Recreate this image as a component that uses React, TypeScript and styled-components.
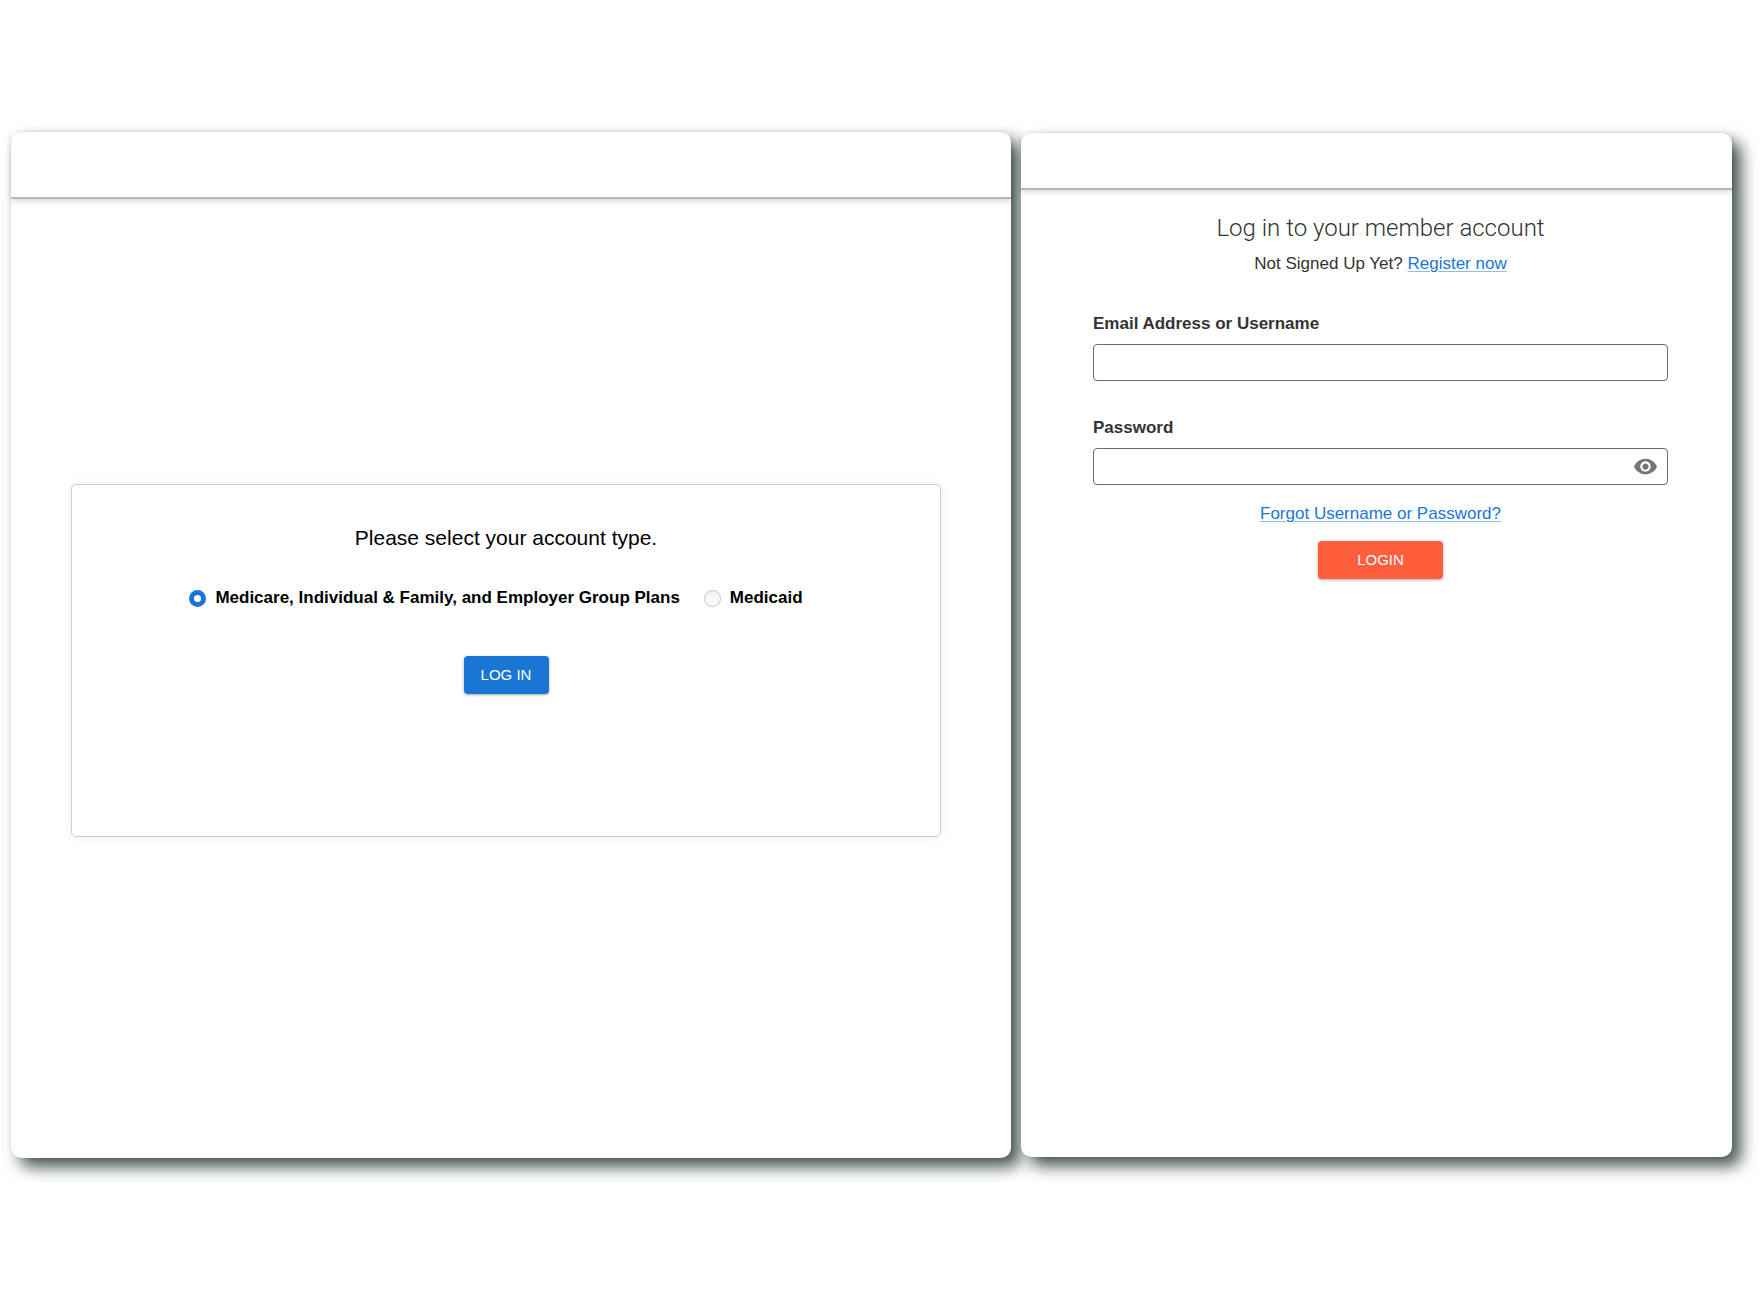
import React, { useState } from 'react';
import styled, { createGlobalStyle } from 'styled-components';

const GlobalStyle = createGlobalStyle`
  *, *::before, *::after { box-sizing: border-box; }
  body {
    margin: 0;
    background: #fff;
    font-family: "Liberation Sans", Arial, Helvetica, sans-serif;
  }
`;

const Page = styled.main`
  display: grid;
  grid-template-columns: 1000fr 711fr;
  gap: 10px;
  min-height: 100vh;
  padding: 132px 30px 132px 11px;
`;

const Panel = styled.section<{ $inset?: boolean }>`
  display: flex;
  flex-direction: column;
  margin: ${(p) => (p.$inset ? '1px 0' : '0')};
  border-radius: 10px;
  background: #fff;
  box-shadow: 0 0 1px rgba(0, 0, 0, 0.25), 9px 9px 16px #45554f;
`;

const TopBar = styled.header<{ $height: number }>`
  height: ${(p) => p.$height}px;
  border-bottom: 2px solid #b9b9b9;
  box-shadow: 0 2px 6px rgba(0, 0, 0, 0.16);
`;

const AccountCard = styled.form`
  display: flex;
  flex-direction: column;
  align-items: center;
  min-height: 353px;
  margin: 285px 70px 0 60px;
  padding: 41px 0;
  border: 1px solid #cdcdcd;
  border-radius: 5px;
  box-shadow: 0 0 10px rgba(0, 0, 0, 0.08);
`;

const CardTitle = styled.h2`
  margin: 0 0 38px;
  font-size: 21px;
  font-weight: 400;
  line-height: 24px;
  color: #000;
`;

const Options = styled.div`
  display: flex;
  gap: 24px;
  margin-bottom: 48px;
  padding-right: 20px;
`;

const Option = styled.label`
  display: flex;
  align-items: center;
  gap: 9px;
  font-size: 17px;
  font-weight: 700;
  line-height: 20px;
  color: #000;
  white-space: nowrap;
`;

const Radio = styled.input`
  appearance: none;
  width: 17px;
  height: 17px;
  margin: 0;
  border: 1px solid #c6c6c6;
  border-radius: 50%;
  background: linear-gradient(#f1f1f1, #fff);

  &:checked {
    border: 5px solid #1976d2;
    background: #fff;
  }
`;

const Button = styled.button<{ $color: string; $width: number }>`
  width: ${(p) => p.$width}px;
  height: 38px;
  padding: 0;
  border: 0;
  border-radius: 4px;
  background: ${(p) => p.$color};
  color: #fff;
  font-family: inherit;
  font-size: 15px;
  line-height: 20px;
  cursor: pointer;
  box-shadow: 0 1px 3px rgba(0, 0, 0, 0.35);
`;

const LoginForm = styled.form`
  display: flex;
  flex-direction: column;
  align-items: center;
  padding: 24px 64px 0 72px;
  color: #333;
  font-size: 17px;
  line-height: 20px;
`;

const LoginTitle = styled.h1`
  margin: 0 0 12px;
  font-family: Roboto, "Liberation Sans", sans-serif;
  font-size: 24px;
  font-weight: 300;
  line-height: 28px;
`;

const Hint = styled.p`
  margin: 0 0 40px;
`;

const Link = styled.a`
  color: #1976d2;
  text-decoration: underline;
  text-decoration-thickness: 1px;
  text-decoration-color: #8fbce9;
  text-underline-offset: 2px;
`;

const Field = styled.div`
  display: flex;
  flex-direction: column;
  gap: 10px;
  width: 100%;
  margin-bottom: 37px;

  &:last-of-type {
    margin-bottom: 19px;
  }
`;

const FieldLabel = styled.label`
  font-weight: 700;
`;

const InputBox = styled.div`
  display: flex;
  align-items: center;
  height: 37px;
  padding: 0 9px;
  border: 1px solid #6c6c6c;
  border-radius: 4px;
`;

const TextInput = styled.input`
  flex: 1;
  min-width: 0;
  height: 100%;
  padding: 0;
  border: 0;
  outline: 0;
  background: transparent;
  font: inherit;
`;

const EyeButton = styled.button`
  display: flex;
  padding: 0;
  border: 0;
  background: transparent;
  color: #757575;
  cursor: pointer;
`;

const Actions = styled.footer`
  display: flex;
  flex-direction: column;
  align-items: center;
  gap: 17px;
`;

const EyeIcon = () => (
  <svg width="25" height="25" viewBox="0 0 24 24" fill="currentColor" aria-hidden="true">
    <path d="M12 4.5C7 4.5 2.73 7.61 1 12c1.73 4.39 6 7.5 11 7.5s9.27-3.11 11-7.5c-1.73-4.39-6-7.5-11-7.5zM12 17c-2.76 0-5-2.24-5-5s2.24-5 5-5 5 2.24 5 5-2.24 5-5 5zm0-8c-1.66 0-3 1.34-3 3s1.34 3 3 3 3-1.34 3-3-1.34-3-3-3z" />
  </svg>
);

const accountTypes = [
  { value: 'plans', label: 'Medicare, Individual & Family, and Employer Group Plans' },
  { value: 'medicaid', label: 'Medicaid' },
];

export default function App() {
  const [account, setAccount] = useState('plans');
  const [visible, setVisible] = useState(false);
  const stay = (e: React.FormEvent) => e.preventDefault();

  return (
    <>
      <GlobalStyle />
      <Page>
        <Panel>
          <TopBar $height={67} />
          <AccountCard onSubmit={stay}>
            <CardTitle>Please select your account type.</CardTitle>
            <Options role="radiogroup">
              {accountTypes.map((type) => (
                <Option key={type.value}>
                  <Radio
                    type="radio"
                    name="account"
                    value={type.value}
                    checked={account === type.value}
                    onChange={() => setAccount(type.value)}
                  />
                  {type.label}
                </Option>
              ))}
            </Options>
            <Button $color="#1976d2" $width={85}>LOG IN</Button>
          </AccountCard>
        </Panel>
        <Panel $inset>
          <TopBar $height={57} />
          <LoginForm onSubmit={stay}>
            <LoginTitle>Log in to your member account</LoginTitle>
            <Hint>
              Not Signed Up Yet? <Link href="#register">Register now</Link>
            </Hint>
            <Field>
              <FieldLabel htmlFor="username">Email Address or Username</FieldLabel>
              <InputBox>
                <TextInput id="username" type="text" />
              </InputBox>
            </Field>
            <Field>
              <FieldLabel htmlFor="password">Password</FieldLabel>
              <InputBox>
                <TextInput id="password" type={visible ? 'text' : 'password'} />
                <EyeButton type="button" onClick={() => setVisible(!visible)}>
                  <EyeIcon />
                </EyeButton>
              </InputBox>
            </Field>
            <Actions>
              <Link href="#forgot">Forgot Username or Password?</Link>
              <Button $color="#ff5f3d" $width={125}>LOGIN</Button>
            </Actions>
          </LoginForm>
        </Panel>
      </Page>
    </>
  );
}
